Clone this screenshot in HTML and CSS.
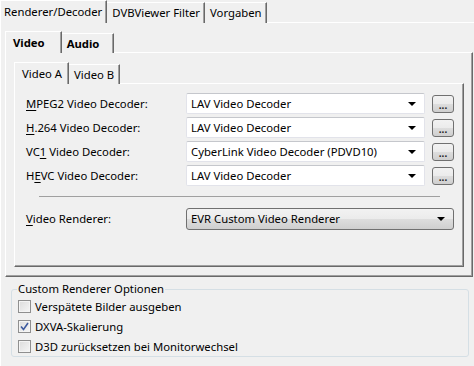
FILE: index.html
```html
<!DOCTYPE html>
<html lang="de">
<head>
    <meta charset="UTF-8">
    <title>Renderer/Decoder</title>
    <link rel="stylesheet" href="styles.css">
</head>
<body>

    <div class="tabctl">
        <div class="tabstrip">
            <div class="tab active">Renderer/Decoder</div>
            <div class="tab">DVBViewer Filter</div>
            <div class="tab">Vorgaben</div>
        </div>
        <div class="page outer-page">

            <div class="tabctl mid">
                <div class="tabstrip bold">
                    <div class="tab active">Video</div>
                    <div class="tab">Audio</div>
                </div>
                <div class="page mid-page">

                    <div class="tabctl inner">
                        <div class="tabstrip">
                            <div class="tab active">Video A</div>
                            <div class="tab">Video B</div>
                        </div>
                        <div class="page inner-page">
                            <div class="decoders">
                                <label><u>M</u>PEG2 Video Decoder:</label>
                                <div class="combo"><span>LAV Video Decoder</span><i class="arrow"></i></div>
                                <button class="dots">...</button>

                                <label><u>H</u>.264 Video Decoder:</label>
                                <div class="combo"><span>LAV Video Decoder</span><i class="arrow"></i></div>
                                <button class="dots">...</button>

                                <label>VC<u>1</u> Video Decoder:</label>
                                <div class="combo"><span>CyberLink Video Decoder (PDVD10)</span><i class="arrow"></i></div>
                                <button class="dots">...</button>

                                <label>H<u>E</u>VC Video Decoder:</label>
                                <div class="combo"><span>LAV Video Decoder</span><i class="arrow"></i></div>
                                <button class="dots">...</button>
                            </div>

                            <div class="separator"></div>

                            <div class="decoders">
                                <label><u>V</u>ideo Renderer:</label>
                                <div class="select"><span>EVR Custom Video Renderer</span><i class="arrow"></i></div>
                            </div>
                        </div>
                    </div>

                </div>
            </div>

            <fieldset class="group">
                <legend>Custom Renderer Optionen</legend>
                <div class="check"><span class="box"></span>Verspätete Bilder ausgeben</div>
                <div class="check"><span class="box">
                    <svg width="9" height="9" viewBox="0 0 9 9"><path d="M1 4.5 L3.5 7.5 L8 1" fill="none" stroke="#3d5a9e" stroke-width="1.6"/></svg>
                </span>DXVA-Skalierung</div>
                <div class="check"><span class="box"></span>D3D zurücksetzen bei Monitorwechsel</div>
            </fieldset>

        </div>
    </div>

</body>
</html>
```

FILE: styles.css
```css
body {
    margin: 0;
    width: 474px;
    height: 366px;
    overflow: hidden;
    background: #f0f0f0;
    font-family: "Noto Sans", sans-serif;
    font-size: 11.3px;
    color: #000;
}

/* tab controls */
.tabstrip {
    display: flex;
    align-items: flex-end;
    position: relative;
    z-index: 1;
    margin-bottom: -1px;
}

.tabstrip.bold {
    font-weight: bold;
}

.tab {
    box-sizing: border-box;
    height: 21px;
    padding: 0 4px 0 5px;
    line-height: 19px;
    background: #f0f0f0;
    border-top: 1px solid #fff;
    border-left: 1px solid #fff;
    border-right: 1px solid #696969;
    box-shadow: inset -1px 0 #a0a0a0;
    white-space: nowrap;
}

.tab.active {
    height: 23px;
    line-height: 22px;
    padding: 0 4px 0 3px;
}

.tab + .tab {
    border-left: none;
}

.page {
    box-sizing: border-box;
    border-top: 1px solid #fff;
    border-left: 1px solid #fff;
    border-right: 1px solid #696969;
    border-bottom: 1px solid #696969;
    box-shadow: inset -1px -1px #a0a0a0;
}

.outer-page {
    height: 360px;
    padding-top: 8px;
    border-right: none;
    border-bottom: none;
    box-shadow: none;
}

.mid {
    margin-left: 4px;
    width: 468px;
}

.mid .tab {
    height: 20px;
    line-height: 20px;
    padding: 0 14px 0 5px;
}

.mid .tab.active {
    height: 22px;
    line-height: 22px;
    padding: 0 16px 0 7px;
}

.mid-page {
    height: 225px;
    padding: 9px 0 0 8px;
}

.inner {
    width: 450px;
}

.inner .tab {
    padding: 0 5px;
}

.inner .tab.active {
    padding: 0 6px 0 7px;
}

.inner-page {
    height: 184px;
    padding: 9px 0 0 11px;
}

/* decoder rows */
.decoders {
    display: grid;
    grid-template-columns: 153px 239px 22px;
    grid-auto-rows: 21px;
    column-gap: 7px;
    row-gap: 3px;
    align-items: center;
}

.decoders u {
    text-decoration-thickness: 1px;
    text-underline-offset: 2px;
}

.combo {
    box-sizing: border-box;
    height: 21px;
    display: flex;
    align-items: center;
    justify-content: space-between;
    padding: 0 8px 0 4px;
    background: #fff;
    border: 1px solid #e2e3ea;
    border-top-color: #c5c7cc;
    border-radius: 2px;
}

.arrow {
    width: 0;
    height: 0;
    border-left: 4px solid transparent;
    border-right: 4px solid transparent;
    border-top: 4px solid #000;
}

.dots {
    box-sizing: border-box;
    width: 22px;
    height: 18px;
    padding: 0;
    font-family: "Noto Sans", sans-serif;
    font-size: 10px;
    font-weight: bold;
    line-height: 18px;
    color: #222;
    border: 1px solid #707070;
    border-radius: 3px;
    background: linear-gradient(#f2f2f2, #ebebeb 50%, #dddddd 51%, #cfcfcf);
}

.separator {
    margin: 10px 0 11px 13px;
    width: 401px;
    border-top: 1px solid #a0a0a0;
}

.select {
    grid-column: 2 / 4;
    box-sizing: border-box;
    height: 22px;
    display: flex;
    align-items: center;
    justify-content: space-between;
    padding: 0 8px 0 4px;
    border: 1px solid #707070;
    border-radius: 3px;
    background: linear-gradient(#f2f2f2, #ebebeb 50%, #dddddd 51%, #cfcfcf);
}

/* group box */
.group {
    margin: 5px 5px 0 10px;
    padding: 0 0 0 5px;
    height: 75px;
    box-sizing: border-box;
    border: 1px solid #d5dfe5;
    border-radius: 3px;
}

.group legend {
    padding: 0 1px;
    line-height: 14px;
}

.check {
    display: flex;
    align-items: center;
    height: 20px;
}

.box {
    box-sizing: border-box;
    width: 13px;
    height: 13px;
    margin: 0 4px 0 1px;
    display: flex;
    align-items: center;
    justify-content: center;
    border: 1px solid #8f8f8f;
    background: linear-gradient(135deg, #dcdcdc, #f6f6f6);
    box-shadow: inset 0 0 0 1px #f4f4f4;
}
```
